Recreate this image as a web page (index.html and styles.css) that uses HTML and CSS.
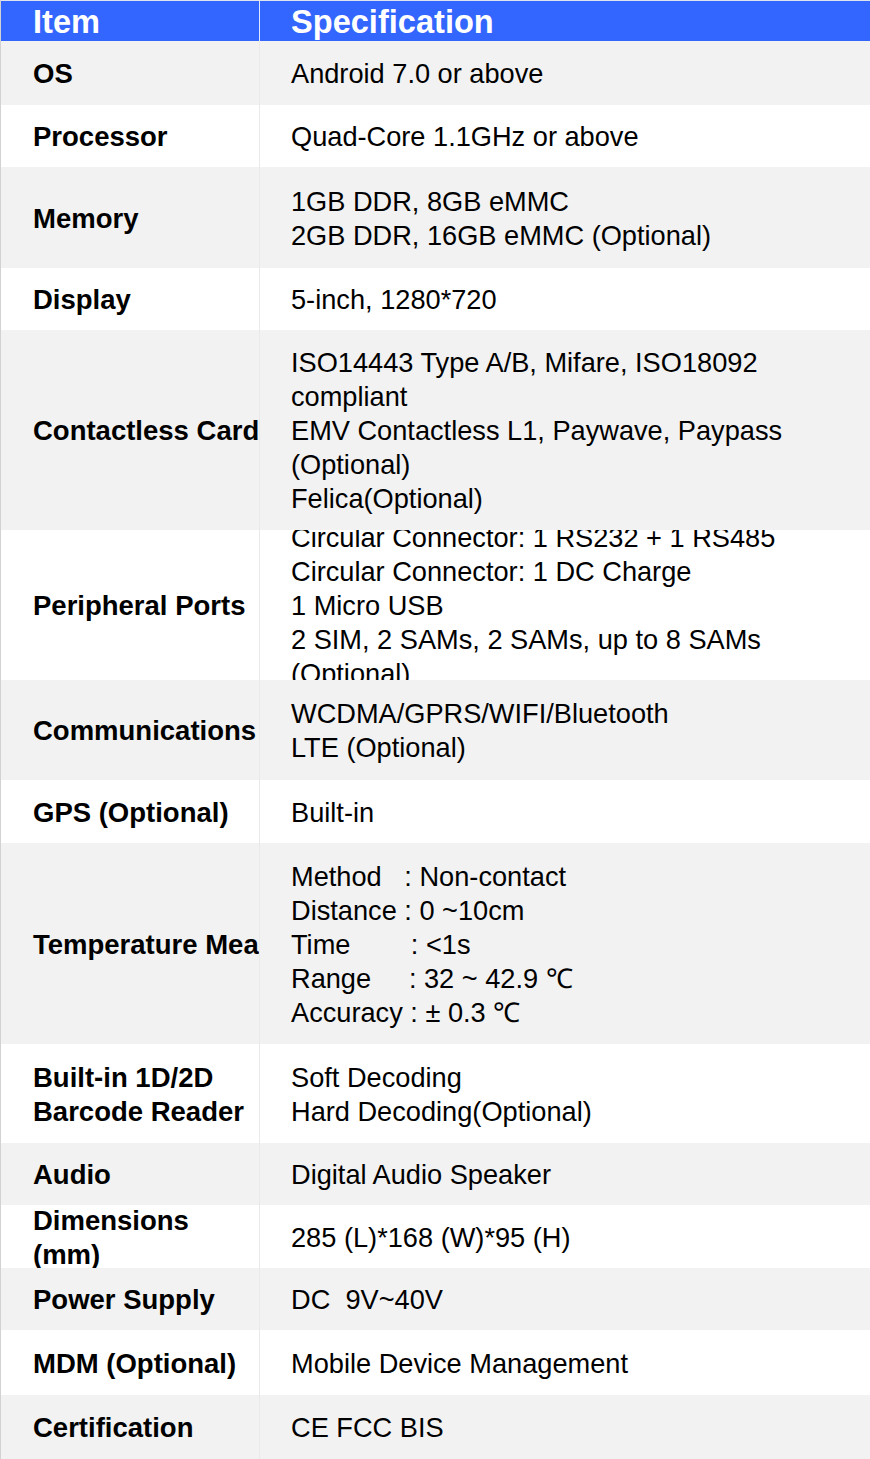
FILE: index.html
```html
<!DOCTYPE html>
<html lang="en">
<head>
<meta charset="utf-8">
<title>Specification</title>
<link rel="stylesheet" href="styles.css">
</head>
<body>
<div class="spec">
  <div class="row head">
    <div class="cell key">Item</div>
    <div class="cell val">Specification</div>
  </div>
  <div class="row h64"><div class="cell key">OS</div><div class="cell val">Android 7.0 or above</div></div>
  <div class="row h62"><div class="cell key">Processor</div><div class="cell val">Quad-Core 1.1GHz or above</div></div>
  <div class="row h101"><div class="cell key">Memory</div><div class="cell val"><div>1GB DDR, 8GB eMMC<br>2GB DDR, 16GB eMMC (Optional)</div></div></div>
  <div class="row h62"><div class="cell key">Display</div><div class="cell val">5-inch, 1280*720</div></div>
  <div class="row h200"><div class="cell key">Contactless Card</div><div class="cell val"><div>ISO14443 Type A/B, Mifare, ISO18092<br>compliant<br>EMV Contactless L1, Paywave, Paypass<br>(Optional)<br>Felica(Optional)</div></div></div>
  <div class="row h150"><div class="cell key">Peripheral Ports</div><div class="cell val"><div>Circular Connector: 1 RS232 + 1 RS485<br>Circular Connector: 1 DC Charge<br>1 Micro USB<br>2 SIM, 2 SAMs, 2 SAMs, up to 8 SAMs<br>(Optional)</div></div></div>
  <div class="row h100"><div class="cell key">Communications</div><div class="cell val"><div>WCDMA/GPRS/WIFI/Bluetooth<br>LTE (Optional)</div></div></div>
  <div class="row h63"><div class="cell key">GPS (Optional)</div><div class="cell val">Built-in</div></div>
  <div class="row h201"><div class="cell key">Temperature Mea</div><div class="cell val"><div class="pre">Method   : Non-contact
Distance : 0 ~10cm
Time        : &lt;1s
Range     : 32 ~ 42.9 ℃
Accuracy : ± 0.3 ℃</div></div></div>
  <div class="row h99"><div class="cell key"><div>Built-in 1D/2D<br>Barcode Reader</div></div><div class="cell val"><div>Soft Decoding<br>Hard Decoding(Optional)</div></div></div>
  <div class="row h62"><div class="cell key">Audio</div><div class="cell val">Digital Audio Speaker</div></div>
  <div class="row h63"><div class="cell key"><div>Dimensions<br>(mm)</div></div><div class="cell val">285 (L)*168 (W)*95 (H)</div></div>
  <div class="row h62"><div class="cell key">Power Supply</div><div class="cell val">DC&nbsp;&nbsp;9V~40V</div></div>
  <div class="row h65"><div class="cell key">MDM (Optional)</div><div class="cell val">Mobile Device Management</div></div>
  <div class="row h64"><div class="cell key">Certification</div><div class="cell val">CE FCC BIS</div></div>
</div>
</body>
</html>
```
FILE: styles.css
```css
html, body {
  margin: 0;
  padding: 0;
  background: #ffffff;
}

.spec {
  width: 870px;
  box-sizing: border-box;
  border-left: 1px solid #d2d2d2;
  font-family: "Liberation Sans", Arial, sans-serif;
  color: #000000;
  display: flex;
  flex-direction: column;
}

.row {
  display: grid;
  grid-template-columns: 258px 1fr;
  overflow: hidden;
}

.row:nth-child(even) {
  background: #f2f2f2;
}

.row:nth-child(odd) {
  background: #ffffff;
}

.cell {
  display: flex;
  align-items: center;
  overflow: hidden;
  box-sizing: border-box;
  padding-top: 2px;
  font-size: 27.2px;
  line-height: 34px;
  white-space: nowrap;
}

.key {
  font-weight: bold;
  font-size: 27.5px;
  padding-left: 32px;
}

.val {
  border-left: 1px solid #e9e9e9;
  padding-left: 31px;
  padding-right: 16px;
}

.pre {
  white-space: pre;
}

.row.head {
  height: 40px;
  border-top: 1px solid #dfe3ee;
  background: #3366ff;
  color: #ffffff;
}

.head .cell {
  font-size: 32.6px;
  line-height: 40px;
  font-weight: bold;
}

.head .val {
  border-left: 1px solid #dfe6ff;
}

.h62 { height: 62px; }
.h63 { height: 63px; }
.h64 { height: 64px; }
.h65 { height: 65px; }
.h99 { height: 99px; }
.h100 { height: 100px; }
.h101 { height: 101px; }
.h150 { height: 150px; }
.h200 { height: 200px; }
.h201 { height: 201px; }
```
